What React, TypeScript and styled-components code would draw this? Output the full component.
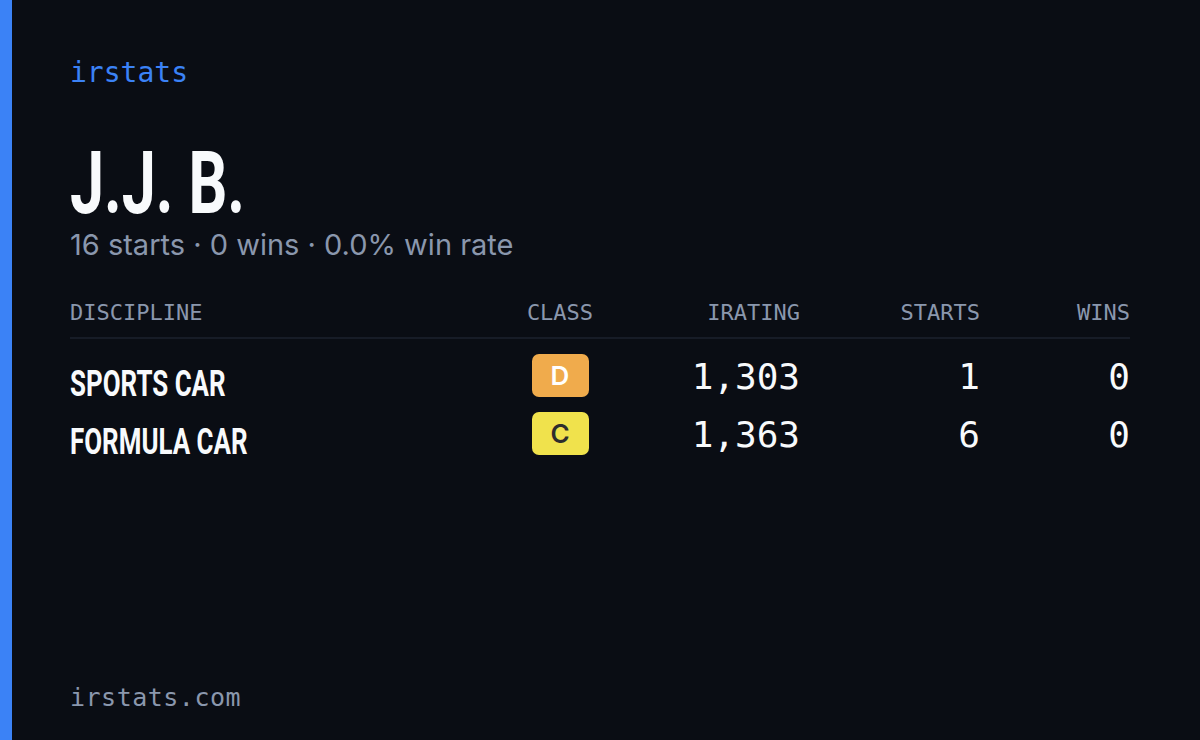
import React from "react";
import styled, { createGlobalStyle } from "styled-components";

const Global = createGlobalStyle`
  html, body { margin: 0; padding: 0; background: #0a0d14; }
  body { width: 1200px; height: 740px; overflow: hidden; }
`;

const mono = `"DejaVu Sans Mono", "Liberation Mono", monospace`;
const display = `Roboto, "Liberation Sans", sans-serif`;
const sans = `Inter, "Open Sans", sans-serif`;

const Page = styled.div`
  display: flex;
  width: 1200px;
  height: 740px;
  background: #0a0d14;
`;

const AccentBar = styled.div`
  width: 12px;
  flex: none;
  background: #3b82f6;
`;

const Content = styled.main`
  flex: 1;
  display: flex;
  flex-direction: column;
  padding: 53px 69px 22px 58px;
`;

const Brand = styled.div`
  font-family: ${mono};
  font-size: 28px;
  line-height: 40px;
  color: #3b82f6;
`;

const Name = styled.h1`
  margin: 50px 0 0 0;
  height: 80px;
  font-family: ${display};
  font-weight: 700;
  font-size: 87px;
  line-height: 80px;
  color: #f8fafc;
`;

const Squeeze = styled.span<{ $x: number }>`
  display: inline-block;
  transform: scaleX(${(p) => p.$x});
  transform-origin: left center;
  white-space: nowrap;
`;

const Summary = styled.div`
  margin-top: 4px;
  font-family: ${sans};
  font-size: 29px;
  line-height: 36px;
  color: #8a97ad;
`;

const Table = styled.div`
  margin-top: 36px;
  display: grid;
  grid-template-columns: 450px 80px 200px 180px 150px;
  grid-auto-rows: 58px;
  grid-template-rows: auto;
  width: 1060px;
`;

const HeadCell = styled.div<{ $align: string }>`
  font-family: ${mono};
  font-size: 22px;
  line-height: 28px;
  color: #8a97ad;
  text-align: ${(p) => p.$align};
  padding-bottom: 10px;
  border-bottom: 2px solid #171c27;
  margin-bottom: 15px;
`;

const Label = styled.div`
  font-family: ${display};
  font-weight: 700;
  font-size: 36px;
  line-height: 43px;
  color: #f8fafc;
  padding-top: 9px;
`;

const BadgeCell = styled.div`
  display: flex;
  justify-content: center;
  align-items: flex-start;
`;

const Badge = styled.div<{ $bg: string; $fg: string }>`
  width: 57px;
  height: 43px;
  border-radius: 7px;
  background: ${(p) => p.$bg};
  color: ${(p) => p.$fg};
  font-family: ${sans};
  font-weight: 600;
  font-size: 26px;
  line-height: 43px;
  text-align: center;
`;

const Num = styled.div`
  font-family: ${mono};
  font-size: 36px;
  line-height: 43px;
  padding-top: 1px;
  color: #f8fafc;
  text-align: right;
`;

const Footer = styled.div`
  margin-top: auto;
  font-family: ${mono};
  font-size: 25px;
  line-height: 40px;
  letter-spacing: 0.5px;
  color: #8a97ad;
`;

const rows = [
  { name: "SPORTS CAR", cls: "D", bg: "#f0ab4c", fg: "#ffffff", ir: "1,303", starts: "1", wins: "0" },
  { name: "FORMULA CAR", cls: "C", bg: "#f0e24c", fg: "#2d2d2d", ir: "1,363", starts: "6", wins: "0" },
];

export default function App() {
  return (
    <>
      <Global />
      <Page>
        <AccentBar />
        <Content>
          <Brand>irstats</Brand>
          <Name>
            <Squeeze $x={0.7}>J.J. B.</Squeeze>
          </Name>
          <Summary>16 starts · 0 wins · 0.0% win rate</Summary>
          <Table>
            <HeadCell $align="left">DISCIPLINE</HeadCell>
            <HeadCell $align="center">CLASS</HeadCell>
            <HeadCell $align="right">IRATING</HeadCell>
            <HeadCell $align="right">STARTS</HeadCell>
            <HeadCell $align="right">WINS</HeadCell>
            {rows.map((r) => (
              <React.Fragment key={r.name}>
                <Label>
                  <Squeeze $x={0.72}>{r.name}</Squeeze>
                </Label>
                <BadgeCell>
                  <Badge $bg={r.bg} $fg={r.fg}>{r.cls}</Badge>
                </BadgeCell>
                <Num>{r.ir}</Num>
                <Num>{r.starts}</Num>
                <Num>{r.wins}</Num>
              </React.Fragment>
            ))}
          </Table>
          <Footer>irstats.com</Footer>
        </Content>
      </Page>
    </>
  );
}
